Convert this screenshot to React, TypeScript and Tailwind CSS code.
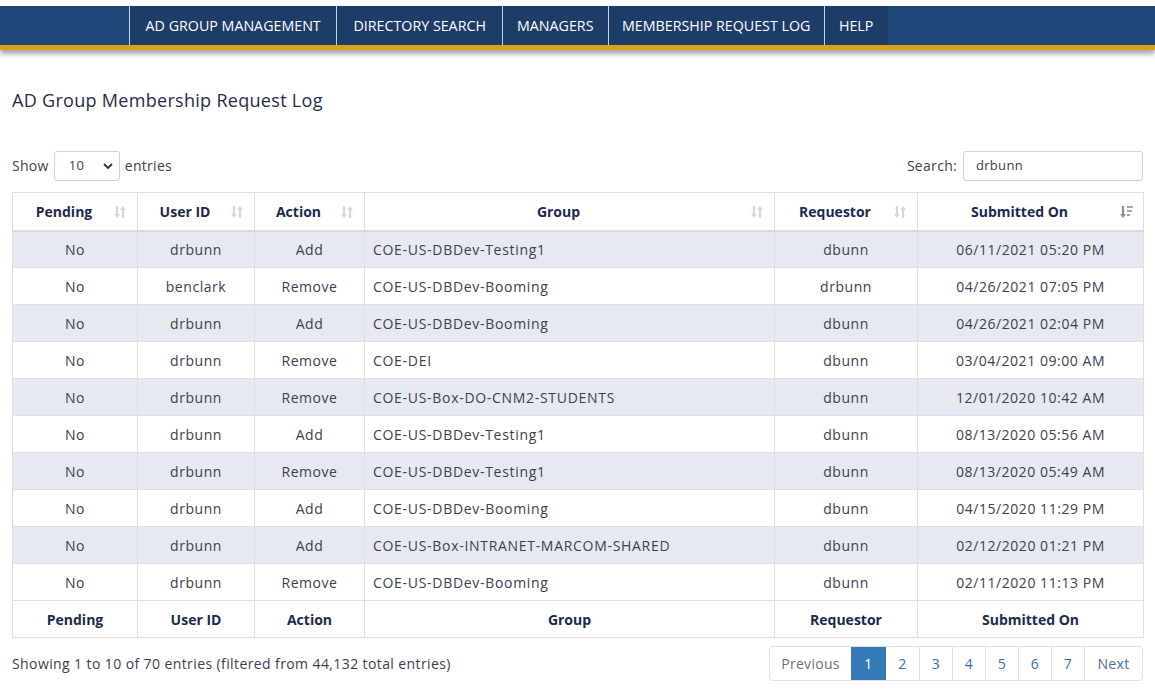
import React from "react";

const rows = [
  ["No", "drbunn", "Add", "COE-US-DBDev-Testing1", "dbunn", "06/11/2021 05:20 PM"],
  ["No", "benclark", "Remove", "COE-US-DBDev-Booming", "drbunn", "04/26/2021 07:05 PM"],
  ["No", "drbunn", "Add", "COE-US-DBDev-Booming", "dbunn", "04/26/2021 02:04 PM"],
  ["No", "drbunn", "Remove", "COE-DEI", "dbunn", "03/04/2021 09:00 AM"],
  ["No", "drbunn", "Remove", "COE-US-Box-DO-CNM2-STUDENTS", "dbunn", "12/01/2020 10:42 AM"],
  ["No", "drbunn", "Add", "COE-US-DBDev-Testing1", "dbunn", "08/13/2020 05:56 AM"],
  ["No", "drbunn", "Remove", "COE-US-DBDev-Testing1", "dbunn", "08/13/2020 05:49 AM"],
  ["No", "drbunn", "Add", "COE-US-DBDev-Booming", "dbunn", "04/15/2020 11:29 PM"],
  ["No", "drbunn", "Add", "COE-US-Box-INTRANET-MARCOM-SHARED", "dbunn", "02/12/2020 01:21 PM"],
  ["No", "drbunn", "Remove", "COE-US-DBDev-Booming", "dbunn", "02/11/2020 11:13 PM"],
];

const cols = [
  { name: "Pending", w: "w-[125px]" },
  { name: "User ID", w: "w-[117px]" },
  { name: "Action", w: "w-[110px]" },
  { name: "Group", w: "w-[410px]" },
  { name: "Requestor", w: "w-[143px]" },
  { name: "Submitted On", w: "w-[226px]" },
];

function SortBoth() {
  return (
    <svg width="14" height="16" viewBox="0 0 14 16" className="text-[#d3d6db]">
      <path d="M4 2v10" stroke="currentColor" strokeWidth="2.2" />
      <path d="M1 10l3 4 3-4z" fill="currentColor" />
      <path d="M10 14V4" stroke="currentColor" strokeWidth="2.2" />
      <path d="M7 6l3-4 3 4z" fill="currentColor" />
    </svg>
  );
}

function SortDesc() {
  return (
    <svg width="14" height="16" viewBox="0 0 14 16">
      <path d="M4 2v10" stroke="#8a8f97" strokeWidth="2.2" />
      <path d="M1 10l3 4 3-4z" fill="#8a8f97" />
      <rect x="8" y="2" width="6" height="2" fill="#a9adb3" />
      <rect x="8" y="6" width="5" height="2" fill="#a9adb3" />
      <rect x="8" y="10" width="3" height="2" fill="#a9adb3" />
    </svg>
  );
}

const navItems = [
  { t: "AD GROUP MANAGEMENT", w: "w-[207px]" },
  { t: "DIRECTORY SEARCH", w: "w-[166px]" },
  { t: "MANAGERS", w: "w-[106px]" },
  { t: "MEMBERSHIP REQUEST LOG", w: "w-[216px]" },
  { t: "HELP", w: "w-[64px]" },
];

export default function App() {
  return (
    <div className="w-[1155px] h-[697px] bg-white overflow-hidden text-[#3b4150]" style={{ fontFamily: '"Open Sans", "Noto Sans", sans-serif' }}>
      <div className="pt-[6px]">
        <div className="bg-[#21467a] border-b-[5px] border-[#d6a312] shadow-[0_4px_5px_rgba(0,0,0,0.35)] flex h-[44px]">
          <div className="w-[129px]" />
          {navItems.map((n) => (
            <div
              key={n.t}
              className={`${n.w} h-[39px] bg-[#1d3c68] border-l border-[#c9d2de] flex items-center justify-center text-white text-[15px]`}
            >
              <span className="inline-block whitespace-nowrap scale-x-[0.95]">{n.t}</span>
            </div>
          ))}
        </div>
      </div>

      <div className="px-[12px]">
        <h1 className="mt-[37px] text-[18px] text-[#1f2d4a] leading-[26px] tracking-[0.3px]">AD Group Membership Request Log</h1>

        <div className="mt-[38px] flex items-center justify-between h-[30px]">
          <div className="flex items-center text-[14px] text-[#3b4150] tracking-[0.3px]">
            <span className="-mt-[2px]">Show</span>
            <div className="ml-[5px] mr-[5px] w-[66px] h-[30px] border border-[#cfd3d8] rounded-[3px] flex items-center justify-between pl-[14px] pr-[6px]">
              <span className="text-[13px]">10</span>
              <svg width="10" height="8" viewBox="0 0 10 8"><path d="M1 2l4 4 4-4" stroke="#333" strokeWidth="1.8" fill="none" /></svg>
            </div>
            <span className="-mt-[2px]">entries</span>
          </div>
          <div className="flex items-center text-[14px] tracking-[0.3px]">
            <span className="-mt-[2px]">Search:</span>
            <div className="ml-[6px] w-[180px] h-[30px] border border-[#cfd3d8] rounded-[3px] flex items-center px-[12px] text-[13px]">drbunn</div>
          </div>
        </div>

        <table className="mt-[11px] w-[1131px] border-collapse text-[14px] table-fixed">
          <thead>
            <tr className="h-[38px] border-b-2 border-[#d9dce1]">
              {cols.map((c) => (
                <th key={c.name} className={`${c.w} border border-[#dcdfe3] font-bold text-[#1b2b4d] relative pr-[22px] pl-0`}>
                  {c.name}
                  <span className="absolute right-[10px] top-[11px]">{c.name === "Submitted On" ? <SortDesc /> : <SortBoth />}</span>
                </th>
              ))}
            </tr>
          </thead>
          <tbody>
            {rows.map((r, i) => (
              <tr key={i} className={`h-[37px] ${i % 2 === 0 ? "bg-[#e6e9ef]" : "bg-white"}`}>
                {r.map((c, j) => (
                  <td key={j} className={`border border-[#dcdfe3] ${j === 3 ? "text-left pl-[8px] tracking-[0.7px]" : "text-center tracking-[0.55px]"}`}>
                    {c}
                  </td>
                ))}
              </tr>
            ))}
          </tbody>
          <tfoot>
            <tr className="h-[37px]">
              {cols.map((c) => (
                <th key={c.name} className="border border-[#dcdfe3] font-bold text-[#1b2b4d]">{c.name}</th>
              ))}
            </tr>
          </tfoot>
        </table>

        <div className="flex items-center justify-between mt-[8px]">
          <div className="text-[14px] text-[#3b4150] tracking-[0.4px]">Showing 1 to 10 of 70 entries (filtered from 44,132 total entries)</div>
          <div className="flex h-[35px] border border-[#dde0e4] rounded-[4px] text-[14px] overflow-hidden tracking-[0.3px]">
            <div className="w-[81px] flex items-center justify-center text-[#6c727b]">Previous</div>
            <div className="w-[35px] flex items-center justify-center bg-[#337ab7] text-white">1</div>
            {["2", "3", "4", "5", "6", "7"].map((p, i) => (
              <div key={p} className={`${i === 0 ? "" : "border-l"} w-[33px] border-[#dde0e4] flex items-center justify-center text-[#3f6fa1]`}>{p}</div>
            ))}
            <div className="w-[58px] border-l border-[#dde0e4] flex items-center justify-center text-[#3f6fa1]">Next</div>
          </div>
        </div>
      </div>
    </div>
  );
}
